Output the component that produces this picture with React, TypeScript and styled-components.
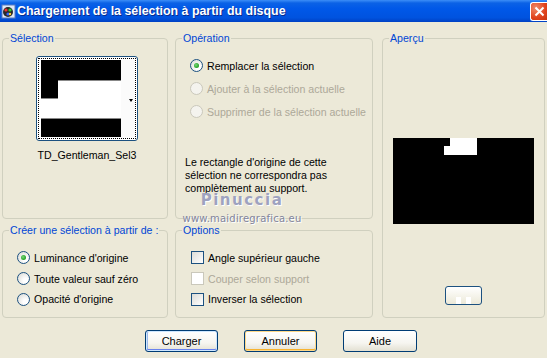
import React from "react";
import styled, { createGlobalStyle, css } from "styled-components";

const FS = "10.6px";

const Global = createGlobalStyle`
  html, body { margin: 0; padding: 0; background: #ece9d8; }
  body { font-family: "Liberation Sans", Arial, sans-serif; font-size: ${FS}; color: #000; }
  * { box-sizing: border-box; }
`;

const Window = styled.div`
  width: 547px;
  height: 358px;
  background: #ece9d8;
  position: relative;
  overflow: hidden;
`;

const TitleBar = styled.div`
  height: 22px;
  display: flex;
  align-items: center;
  background: linear-gradient(#3c8ef7 0px, #0b62e6 3px, #0058e8 40%, #0053df 80%, #0041c4 100%);
  padding: 0 0 0 1px;
`;

const TitleText = styled.div`
  color: #fff;
  font-family: "Liberation Sans", Arial, sans-serif;
  font-weight: bold;
  font-size: 12.4px;
  margin-left: 1px;
  flex: 1;
  text-shadow: 1px 1px 0 #0a2c8c;
`;

const CloseBtn = styled.div`
  width: 17px;
  height: 19px;
  border: 1px solid #fff;
  border-right: none;
  border-radius: 3px 0 0 3px;
  background: radial-gradient(circle at 30% 30%, #f08a6a, #e0421c 60%, #c83410);
  display: flex;
  align-items: center;
  justify-content: center;
`;

const Body = styled.div`
  display: grid;
  grid-template-columns: 166px 198px 165px;
  grid-template-rows: 181px 88px;
  column-gap: 7px;
  row-gap: 11px;
  padding: 16px 0 0 2px;
  & > :nth-child(3) { margin-left: 2px; }
`;

const Group = styled.div<{ $span?: boolean }>`
  position: relative;
  border: 1px solid #d0d0bf;
  border-radius: 4px;
  ${(p) => p.$span && css`grid-row: 1 / span 2; grid-column: 3;`}
`;

const Legend = styled.span`
  position: absolute;
  top: -7px;
  left: 6px;
  padding: 0 1px;
  background: #ece9d8;
  color: #0046d5;
  font-size: ${FS};
  line-height: 13px;
  white-space: nowrap;
`;

const SelBody = styled.div`
  display: flex;
  flex-direction: column;
  align-items: center;
  padding: 17px 0 0 4px;
`;

const Thumb = styled.div`
  width: 102px;
  height: 85px;
  border: 1px solid #1c5180;
  border-radius: 3px;
  background: #fff;
  padding: 1px;
`;

const ThumbInner = styled.div`
  width: 100%;
  height: 100%;
  border: 1px dotted #000;
  padding: 1px 2px;
`;

const ThumbLabel = styled.div`
  margin-top: 8px;
  font-size: ${FS};
`;

const OpBody = styled.div`
  display: flex;
  flex-direction: column;
  padding: 15px 0 0 14px;
`;

const OptRow = styled.div<{ $h?: number; $disabled?: boolean }>`
  display: flex;
  align-items: center;
  height: ${(p) => p.$h ?? 23}px;
  gap: 4px;
  color: ${(p) => (p.$disabled ? "#aca899" : "#000")};
  white-space: nowrap;
`;

const RadioCircle = styled.span<{ $checked?: boolean; $disabled?: boolean }>`
  width: 13px;
  height: 13px;
  border-radius: 50%;
  border: 1px solid ${(p) => (p.$disabled ? "#cac8bb" : "#1c5180")};
  background: ${(p) =>
    p.$disabled ? "#f4f3ee" : "radial-gradient(circle at 70% 70%, #fff 20%, #dcdcd7 90%)"};
  display: inline-flex;
  align-items: center;
  justify-content: center;
  flex: none;
  &::after {
    content: "";
    display: ${(p) => (p.$checked ? "block" : "none")};
    width: 5px;
    height: 5px;
    border-radius: 50%;
    background: radial-gradient(circle at 40% 40%, #7ad67a, #21a121 70%);
  }
`;

const Box = styled.span<{ $disabled?: boolean }>`
  width: 13px;
  height: 13px;
  border: 1px solid ${(p) => (p.$disabled ? "#cac8bb" : "#1c5180")};
  background: ${(p) => (p.$disabled ? "#fff" : "linear-gradient(135deg, #dcdcd7, #fff)")};
  flex: none;
`;

const Note = styled.div`
  margin: 33px 0 0 -5px;
  line-height: 13px;
  font-size: ${FS};
`;

const CreateBody = styled.div`
  display: flex;
  flex-direction: column;
  padding: 16px 0 0 14px;
`;

const OptionsBody = styled.div`
  display: flex;
  flex-direction: column;
  padding: 16px 0 0 15px;
`;

const PreviewBody = styled.div`
  display: flex;
  flex-direction: column;
  align-items: center;
  padding-top: 99px;
`;

const PreviewImg = styled.div`
  width: 141px;
  height: 86px;
  background: #000;
`;

const SmallBtn = styled.div`
  margin-top: 62px;
  width: 37px;
  height: 19px;
  border: 1px solid #1c5180;
  border-radius: 3px;
  background: linear-gradient(#fff, #ece9d8);
  display: flex;
  align-items: flex-end;
  justify-content: center;
`;

const Buttons = styled.div`
  display: flex;
  gap: 26px;
  padding: 12px 0 0 145px;
`;

const Button = styled.button<{ $variant?: "default" | "hover"; $w?: number }>`
  width: ${(p) => p.$w ?? 73}px;
  height: 22px;
  border: 1px solid #003c74;
  border-radius: 3px;
  background: linear-gradient(#fff 0%, #f6f5f0 60%, #e3e0d2 100%);
  font-family: "Liberation Sans", Arial, sans-serif;
  font-size: 11px;
  color: #000;
  padding: 0;
  ${(p) =>
    p.$variant === "default" &&
    css`
      box-shadow: inset 0 0 0 1px #cee7ff, inset 0 -1px 0 1px #6982ee, inset 1px 0 0 1px #9db9eb;
    `}
  ${(p) =>
    p.$variant === "hover" &&
    css`
      box-shadow: inset 0 0 0 1px #fdd889, inset 0 -1px 0 1px #f8b330;
    `}
`;

const Watermark = styled.div`
  position: absolute;
  left: 182px;
  top: 193px;
  display: flex;
  flex-direction: column;
  align-items: center;
  width: 120px;
  pointer-events: none;
`;

const WmName = styled.div`
  font-family: "DejaVu Sans", sans-serif;
  font-weight: bold;
  font-size: 15px;
  letter-spacing: 1.5px;
  color: #9ea2bf;
  text-shadow: 1px 1px 0 #fff;
  line-height: 15px;
`;

const WmUrl = styled.div`
  font-family: "DejaVu Sans", sans-serif;
  font-size: 10px;
  color: #82859c;
  letter-spacing: 0.2px;
  line-height: 11px;
  margin-top: 5px;
  text-shadow: 1px 1px 0 #fff;
`;

function Radio({ label, checked, disabled, h }: { label: string; checked?: boolean; disabled?: boolean; h?: number }) {
  return (
    <OptRow $disabled={disabled} $h={h}>
      <RadioCircle $checked={checked} $disabled={disabled} />
      <span>{label}</span>
    </OptRow>
  );
}

function Check({ label, disabled, h }: { label: string; disabled?: boolean; h?: number }) {
  return (
    <OptRow $disabled={disabled} $h={h}>
      <Box $disabled={disabled} />
      <span>{label}</span>
    </OptRow>
  );
}

export default function App() {
  return (
    <Window>
      <Global />
      <TitleBar>
        <svg width="15" height="15" viewBox="0 0 15 15">
          <rect x="1" y="1" width="13" height="13" fill="#dfe8f5" stroke="#5a7cc0" />
          <circle cx="7" cy="8" r="5" fill="#2a2a2a" />
          <circle cx="5" cy="6" r="1.6" fill="#e33" />
          <circle cx="9" cy="6" r="1.6" fill="#3c3" />
          <circle cx="7" cy="10" r="1.6" fill="#36f" />
          <circle cx="9" cy="10" r="1.2" fill="#fc3" />
        </svg>
        <TitleText>Chargement de la sélection à partir du disque</TitleText>
        <CloseBtn>
          <svg width="11" height="11" viewBox="0 0 11 11">
            <path d="M1.5 1.5 L9.5 9.5 M9.5 1.5 L1.5 9.5" stroke="#fff" strokeWidth="2" />
          </svg>
        </CloseBtn>
      </TitleBar>
      <Body>
        <Group>
          <Legend>Sélection</Legend>
          <SelBody>
            <Thumb>
              <ThumbInner>
                <svg width="94" height="77" viewBox="0 0 94 77">
                  <rect x="0" y="0" width="94" height="77" fill="#fff" />
                  <rect x="80" y="0" width="14" height="77" fill="#fbfbfb" />
                  <rect x="0" y="0" width="80" height="20" fill="#000" />
                  <rect x="17" y="20" width="63" height="1" fill="#888" />
                  <rect x="0" y="20" width="17" height="18" fill="#000" />
                  <rect x="0" y="38" width="17" height="1" fill="#888" />
                  <rect x="0" y="58" width="80" height="1" fill="#888" />
                  <rect x="0" y="59" width="80" height="18" fill="#000" />
                  <path d="M88 39 L92 39 L90 42 Z" fill="#000" />
                </svg>
              </ThumbInner>
            </Thumb>
            <ThumbLabel>TD_Gentleman_Sel3</ThumbLabel>
          </SelBody>
        </Group>
        <Group>
          <Legend>Opération</Legend>
          <OpBody>
            <Radio label="Remplacer la sélection" checked />
            <Radio label="Ajouter à la sélection actuelle" disabled />
            <Radio label="Supprimer de la sélection actuelle" disabled />
            <Note>
              Le rectangle d'origine de cette
              <br />
              sélection ne correspondra pas
              <br />
              complètement au support.
            </Note>
          </OpBody>
        </Group>
        <Group $span>
          <Legend>Aperçu</Legend>
          <PreviewBody>
            <PreviewImg>
              <svg width="141" height="86" viewBox="0 0 141 86">
                <rect x="57" y="0" width="27" height="8" fill="#fff" />
                <rect x="51" y="8" width="33" height="9" fill="#fff" />
              </svg>
            </PreviewImg>
            <SmallBtn>
              <svg width="22" height="8" viewBox="0 0 22 8">
                <rect x="3" y="1" width="5" height="7" fill="#fff" />
                <rect x="13" y="1" width="5" height="7" fill="#fff" />
              </svg>
            </SmallBtn>
          </PreviewBody>
        </Group>
        <Group>
          <Legend>Créer une sélection à partir de :</Legend>
          <CreateBody>
            <Radio label="Luminance d'origine" checked h={21} />
            <Radio label="Toute valeur sauf zéro" h={21} />
            <Radio label="Opacité d'origine" h={20} />
          </CreateBody>
        </Group>
        <Group>
          <Legend>Options</Legend>
          <OptionsBody>
            <Check label="Angle supérieur gauche" h={21} />
            <Check label="Couper selon support" disabled h={21} />
            <Check label="Inverser la sélection" h={20} />
          </OptionsBody>
        </Group>
      </Body>
      <Buttons>
        <Button $variant="default">Charger</Button>
        <Button $variant="hover">Annuler</Button>
        <Button $w={74}>Aide</Button>
      </Buttons>
      <Watermark>
        <WmName>Pinuccia</WmName>
        <WmUrl>www.maidiregrafica.eu</WmUrl>
      </Watermark>
    </Window>
  );
}
